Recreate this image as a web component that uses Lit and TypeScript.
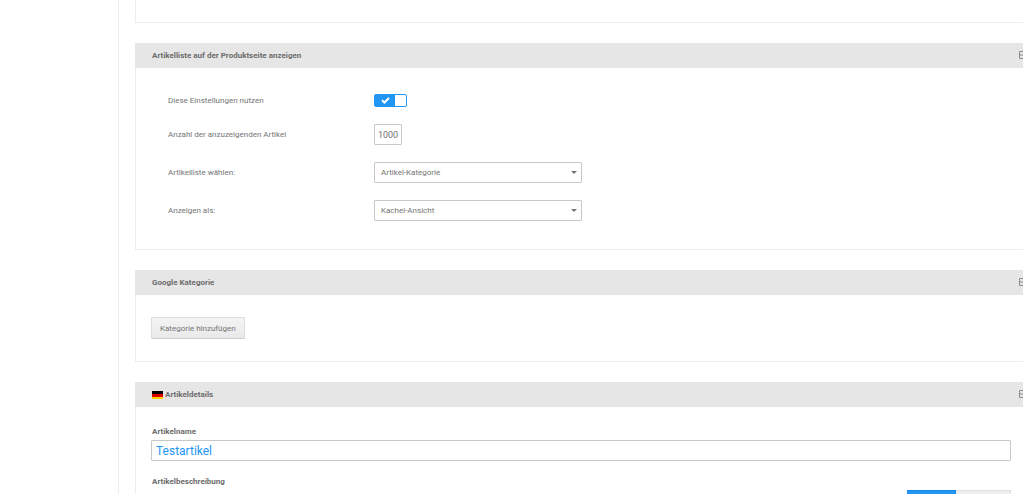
import { LitElement, html, css } from "lit";
import { customElement, property } from "lit/decorators.js";

@customElement("settings-panel")
export class SettingsPanel extends LitElement {
  @property() heading = "";

  static styles = css`
    :host {
      display: block;
      border: 1px solid #ededed;
      border-top: 0;
      border-right: 0;
      background: #fff;
    }
    .head {
      display: flex;
      align-items: center;
      height: 25px;
      margin-left: -1px;
      padding-left: 17px;
      background: #e6e6e6;
      overflow: hidden;
      border-radius: 1px 0 0 0;
    }
    .title {
      display: flex;
      align-items: center;
      gap: 2px;
      flex: 1;
      margin: 0;
      font-size: 8px;
      line-height: 12px;
      font-weight: 700;
      color: #6c6c6c;
    }
    .collapse {
      flex: none;
      width: 8px;
      height: 9px;
      margin-right: -4px;
      padding: 0;
      border: 0;
      background: none;
    }
    .collapse svg {
      display: block;
    }
  `;

  render() {
    return html`
      <header class="head">
        <h2 class="title"><slot name="icon"></slot>${this.heading}</h2>
        <button class="collapse" type="button" aria-label="Einklappen">
          <svg width="8" height="9" viewBox="0 0 8 9" fill="none" stroke="#8c8c8c">
            <path d="M0.5 0.5h7v7h-7zM1 4h6" />
          </svg>
        </button>
      </header>
      <slot></slot>
    `;
  }
}

@customElement("app-root")
export class AppRoot extends LitElement {
  static styles = css`
    :host {
      display: block;
      height: 100vh;
      overflow: hidden;
      background: #fff;
      color: #757575;
      font-family: Roboto, "Liberation Sans", sans-serif;
      font-size: 8px;
      line-height: 12px;
    }
    .page {
      display: grid;
      grid-template-columns: 118px minmax(0, 1fr);
      min-height: 100%;
    }
    .content {
      display: flex;
      flex-direction: column;
      gap: 20px;
      padding: 0 1px 0 16px;
      border-left: 1px solid #ededed;
    }
    .previous {
      height: 22px;
      border: 1px solid #ededed;
      border-top: 0;
      border-right: 0;
    }
    .form {
      display: grid;
      grid-template-columns: 206px 208px;
      align-items: center;
      row-gap: 17px;
      padding: 26px 32px 28px;
    }
    input,
    select,
    button {
      box-sizing: border-box;
      font-family: inherit;
      color: inherit;
    }
    .toggle {
      appearance: none;
      display: block;
      width: 33px;
      height: 13px;
      margin: 0;
      border: 1px solid #2196f3;
      border-radius: 2px;
      background: #fff;
    }
    .switch {
      display: grid;
      width: 33px;
    }
    .switch > * {
      grid-area: 1 / 1;
    }
    .toggle:checked {
      background: linear-gradient(90deg, #2196f3 20px, #fff 20px);
    }
    .check {
      align-self: center;
      margin-left: 7px;
      pointer-events: none;
    }
    .number,
    .select {
      height: 21px;
      border: 1px solid #c8c8c8;
      border-radius: 1px;
      background: #fff;
      font-size: 8px;
    }
    .number {
      width: 28px;
      padding: 0 2px;
      font-size: 9px;
      text-align: center;
    }
    .dropdown {
      display: grid;
      align-items: center;
    }
    .dropdown > * {
      grid-area: 1 / 1;
    }
    .select {
      appearance: none;
      width: 100%;
      padding: 0 16px 0 6px;
    }
    .caret {
      justify-self: end;
      margin-right: 5px;
      pointer-events: none;
    }
    .category {
      padding: 22px 15px 22px;
    }
    .add {
      display: block;
      height: 22px;
      padding: 0 8px;
      border: 1px solid #dedede;
      border-bottom-color: #cecece;
      border-radius: 1px;
      background: linear-gradient(#f4f4f4, #e9e9e9);
      font-size: 8px;
    }
    .details {
      display: flex;
      flex-direction: column;
      padding: 19px 12px 0 15px;
      font-weight: 700;
      color: #6c6c6c;
    }
    .details > label,
    .details > span {
      padding-left: 1px;
    }
    .name {
      width: 100%;
      height: 21px;
      margin: 2px 0 15px;
      padding: 0 4px;
      border: 1px solid #c8c8c8;
      border-radius: 1px;
      background: #fff;
      color: #2196f3;
      font-size: 12px;
    }
    .modes {
      display: flex;
      align-self: flex-end;
      margin-top: 2px;
    }
    .mode {
      width: 55px;
      height: 21px;
      padding: 0;
      border: 1px solid #dedede;
      border-left: 0;
      background: #efefef;
      font-size: 8px;
    }
    .mode.active {
      width: 49px;
      border-color: #1e88e5;
      background: #2196f3;
      color: #fff;
    }
  `;

  private dropdown(id: string, value: string) {
    return html`
      <div class="dropdown">
        <select class="select" id=${id}>
          <option>${value}</option>
        </select>
        <svg class="caret" width="6" height="3" viewBox="0 0 6 3" fill="#757575">
          <path d="M0 0h6L3 3z" />
        </svg>
      </div>
    `;
  }

  render() {
    return html`
      <div class="page">
        <aside></aside>
        <main class="content">
          <section class="previous"></section>

          <settings-panel heading="Artikelliste auf der Produktseite anzeigen">
            <div class="form">
              <label for="use">Diese Einstellungen nutzen</label>
              <div class="switch">
                <input class="toggle" id="use" type="checkbox" checked />
                <svg class="check" width="9" height="7" viewBox="0 0 9 7" fill="none" stroke="#fff" stroke-width="2">
                  <path d="M1 3.2l2.4 2.3L8 1" />
                </svg>
              </div>
              <label for="count">Anzahl der anzuzeigenden Artikel</label>
              <input class="number" id="count" type="text" value="1000" />
              <label for="list">Artikelliste wählen:</label>
              ${this.dropdown("list", "Artikel-Kategorie")}
              <label for="view">Anzeigen als:</label>
              ${this.dropdown("view", "Kachel-Ansicht")}
            </div>
          </settings-panel>

          <settings-panel heading="Google Kategorie">
            <div class="category">
              <button class="add" type="button">Kategorie hinzufügen</button>
            </div>
          </settings-panel>

          <settings-panel heading="Artikeldetails">
            <svg slot="icon" width="11" height="8" viewBox="0 0 11 8">
              <rect width="11" height="3" fill="#000" />
              <rect y="3" width="11" height="3" fill="#d00" />
              <rect y="6" width="11" height="2" fill="#ffce00" />
            </svg>
            <div class="details">
              <label for="name">Artikelname</label>
              <input class="name" id="name" type="text" value="Testartikel" />
              <span>Artikelbeschreibung</span>
              <div class="modes">
                <button class="mode active" type="button" aria-label="Visuell"></button>
                <button class="mode" type="button" aria-label="Quelltext"></button>
              </div>
            </div>
          </settings-panel>
        </main>
      </div>
    `;
  }
}
